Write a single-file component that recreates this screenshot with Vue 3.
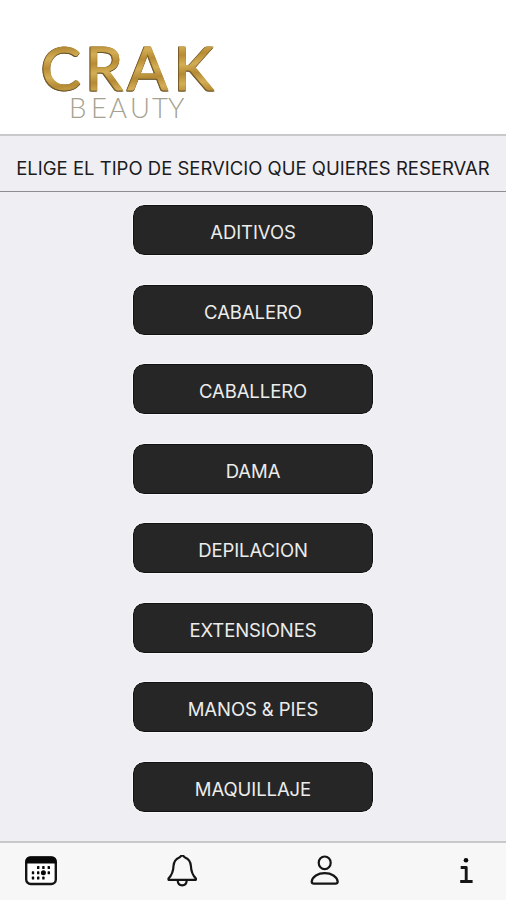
<template>
  <div class="app">
    <header class="header">
      <svg class="logo" width="190" height="90" viewBox="0 0 190 90" role="img" aria-label="Crak Beauty">
        <defs>
          <linearGradient id="gold" x1="0" y1="0" x2="0.06" y2="0.25" spreadMethod="reflect">
            <stop offset="0" stop-color="#b98c34" />
            <stop offset="0.5" stop-color="#d3ae55" />
            <stop offset="1" stop-color="#b58a35" />
          </linearGradient>
        </defs>
        <text class="logo-crak" x="7 51.5 93.5 140" y="56" fill="url(#gold)" stroke="url(#gold)">CRAK</text>
        <text class="logo-beauty" x="35 57 75 96 118 134" y="83.500">BEAUTY</text>
      </svg>
    </header>

    <h1 class="title">ELIGE EL TIPO DE SERVICIO QUE QUIERES RESERVAR</h1>

    <main class="services">
      <button v-for="service in services" :key="service" class="service">{{ service }}</button>
    </main>

    <nav class="tabbar">
      <svg class="icon" width="34" height="34" viewBox="0 0 34 34">
        <rect x="2.200" y="2.500" width="29.600" height="26.500" rx="4.500" fill="#fff" stroke-width="2.400" />
        <path class="solid" d="M1.500 8.500V6.500Q1.500 1.500 6.500 1.500H27.500Q32.500 1.500 32.500 6.500V8.500Z" />
        <rect v-for="(dot, i) in dots" :key="i" class="solid" :x="dot[0]" :y="dot[1]" width="2.400" height="3" rx="0.600" />
        <circle class="solid" cx="19.400" cy="17.800" r="2.500" />
      </svg>
      <svg class="icon" width="34" height="34" viewBox="0 0 34 34">
        <path d="M17.200 0.500C16 0.500 15.500 1.900 14.300 2.500C10.700 4 8.800 7 8.500 11C8.300 16.500 7 20 3.500 23.500V24.800H30.900V23.500C27.400 20 26.100 16.500 25.900 11C25.600 7 23.700 4 20.100 2.500C18.900 1.900 18.400 0.500 17.200 0.500Z" />
        <path d="M12.700 25.500C13 32 21.400 32 21.700 25.500" />
      </svg>
      <svg class="icon" width="34" height="34" viewBox="0 0 34 34">
        <ellipse cx="17.700" cy="7.800" rx="6" ry="6.300" />
        <path d="M7 28.700H28.400Q30.700 28.700 30.700 26.500C30 21.500 24.500 18.200 17.700 18.200C10.900 18.200 5.400 21.500 4.700 26.500Q4.700 28.700 7 28.700Z" />
      </svg>
      <svg class="icon" width="34" height="34" viewBox="0 0 34 34">
        <circle class="solid" cx="18" cy="5.200" r="2.300" />
        <path d="M12.700 12.500H18.200V26M12.200 26.500H24.600" stroke-width="2.900" stroke-linecap="butt" />
      </svg>
    </nav>
  </div>
</template>

<script setup>
const services = [
  'ADITIVOS',
  'CABALERO',
  'CABALLERO',
  'DAMA',
  'DEPILACION',
  'EXTENSIONES',
  'MANOS & PIES',
  'MAQUILLAJE'
]

// days drawn inside the calendar icon
const dots = [
  [13, 11], [18.2, 11], [23.6, 11],
  [7.8, 16.3], [13, 16.3], [18.2, 16.3], [23.6, 16.3],
  [7.8, 21.6], [13, 21.6], [18.2, 21.6]
]
</script>

<style>
body {
  margin: 0;
}
</style>

<style scoped>
.app {
  display: flex;
  flex-direction: column;
  height: 900px;
  background: #efeef3;
  font-family: Inter, "Liberation Sans", sans-serif;
}
.header {
  box-sizing: border-box;
  height: 136px;
  padding: 34px 0 0 34px;
  background: #fff;
  border-bottom: 2px solid #c8c8cb;
}
.logo {
  display: block;
  overflow: visible;
}
.logo-crak {
  font-family: Lato, sans-serif;
  font-size: 60px;
  font-weight: 400;
  stroke-width: 0.8;
  filter: drop-shadow(-1px 0.5px 0 #7a5e27) drop-shadow(0.5px 1px 0.5px #6b5528);
}
.logo-beauty {
  font-family: Lato, sans-serif;
  font-size: 27.5px;
  font-weight: 300;
  fill: #a5a292;
}
.title {
  box-sizing: border-box;
  height: 56px;
  margin: 0;
  padding-top: 20px;
  border-bottom: 1px solid #8d8d92;
  font-size: 18.5px;
  font-weight: 400;
  line-height: 24px;
  text-align: center;
  white-space: nowrap;
  color: #1b1b1d;
}
.services {
  flex: 1;
  display: flex;
  flex-direction: column;
  align-items: center;
  gap: 29.57px;
  padding-top: 13px;
}
.service {
  flex: none;
  width: 240px;
  height: 50px;
  margin: 0;
  padding: 4px 0 0;
  border: 1px solid #111;
  border-radius: 11px;
  outline: 1px solid #f8f8fa;
  background: #262626;
  color: #ececec;
  font-family: inherit;
  font-size: 18.5px;
  letter-spacing: -0.08px;
}
.tabbar {
  display: flex;
  justify-content: space-between;
  box-sizing: border-box;
  height: 59px;
  padding: 12px 24px 0;
  border-top: 2px solid #c8c8ca;
  background: #f7f7f7;
}
.icon {
  fill: none;
  stroke: #151515;
  stroke-width: 2.2;
  stroke-linecap: round;
  stroke-linejoin: round;
}
.solid {
  fill: #080808;
  stroke: none;
}
</style>
